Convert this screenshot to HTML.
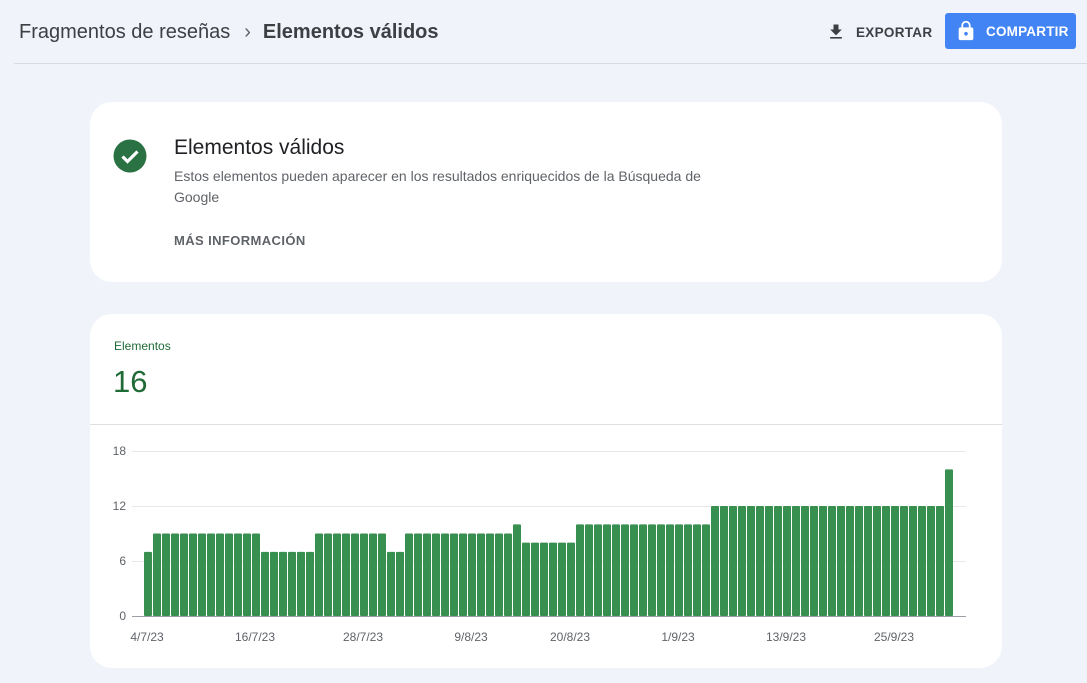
<!DOCTYPE html>
<html><head><meta charset="utf-8"><style>
*{margin:0;padding:0;box-sizing:border-box}
body{width:1087px;height:683px;background:#f0f4fa;font-family:"Liberation Sans",Roboto,sans-serif;position:relative;overflow:hidden;color:#202124}
.hdr{position:absolute;left:0;top:0;width:1087px;height:63px}
.bc{position:absolute;left:19px;top:21px;font-size:20px;color:#3c4043}
.bc b{font-weight:bold;color:#3c4043}
.bc .sep{color:#5f6368;margin:0 12px 0 14px}
.line{position:absolute;left:14px;right:0;top:63px;height:1px;background:#d7dbe0}
.exp{position:absolute;left:826px;top:22px;font-size:13.5px;font-weight:bold;color:#3c4043;letter-spacing:.3px;display:flex;align-items:center}
.share{position:absolute;left:945px;top:13px;width:131px;height:36px;background:#4284f3;border-radius:3px;color:#fff;font-size:13.5px;font-weight:bold;letter-spacing:.2px;display:flex;align-items:center}
.card{position:absolute;left:90px;width:912px;background:#fff;border-radius:22px}
.t1{position:absolute;left:84px;top:34px;font-size:21px;color:#202124}
.d1{position:absolute;left:84px;top:64px;width:570px;font-size:14px;line-height:21px;color:#5f6368}
.more{position:absolute;left:84px;top:131px;font-size:13px;font-weight:bold;color:#5f6368;letter-spacing:.4px}
</style></head><body>
<div class="hdr">
<div class="bc">Fragmentos de reseñas<span class="sep">›</span><b>Elementos válidos</b></div>
<div class="exp"><svg width="20" height="20" viewBox="0 0 24 24" style="margin-right:10px"><path d="M19 9h-4V3H9v6H5l7 7 7-7zM5 18v2h14v-2H5z" fill="#3c4043"/></svg>EXPORTAR</div>
<div class="share"><svg width="22" height="24" viewBox="0 0 24 24" style="margin-left:10px;margin-right:9px"><path d="M18 8h-1V6c0-2.76-2.24-5-5-5S7 3.24 7 6v2H6c-1.1 0-2 .9-2 2v10c0 1.1.9 2 2 2h12c1.1 0 2-.9 2-2V10c0-1.1-.9-2-2-2zm-6 9c-1.1 0-2-.9-2-2s.9-2 2-2 2 .9 2 2-.9 2-2 2zm3.1-9H8.9V6c0-1.710 1.39-3.1 3.1-3.1s3.1 1.39 3.1 3.1v2z" fill="#fff"/></svg>COMPARTIR</div>
</div>
<div class="line"></div>
<div class="card" style="top:102px;height:180px">
<svg style="position:absolute;left:23px;top:37px" width="34" height="34" viewBox="0 0 34 34"><circle cx="17" cy="17" r="16.5" fill="#2a7143"/><path d="M9.5 17.5l5 5 10-10" stroke="#fff" stroke-width="3.2" fill="none"/></svg>
<div class="t1">Elementos válidos</div>
<div class="d1">Estos elementos pueden aparecer en los resultados enriquecidos de la Búsqueda de Google</div>
<div class="more">MÁS INFORMACIÓN</div>
</div>
<div class="card" style="top:314px;height:354px">
<div style="position:absolute;left:24px;top:25px;font-size:12px;color:#1e6b36">Elementos</div>
<div style="position:absolute;left:23px;top:50px;font-size:31px;color:#1e6b36">16</div>
<div style="position:absolute;left:0;right:0;top:110px;height:1px;background:#e0e0e0"></div>
<svg id="ch" style="position:absolute;left:0;top:0" width="912" height="354"></svg>
</div>
<script>
var vals=[7];for(var i=1;i<=12;i++)vals.push(9);for(i=13;i<=18;i++)vals.push(7);for(i=19;i<=26;i++)vals.push(9);vals.push(7,7);for(i=29;i<=40;i++)vals.push(9);vals.push(10);for(i=42;i<=47;i++)vals.push(8);for(i=48;i<=62;i++)vals.push(10);for(i=63;i<=88;i++)vals.push(12);vals.push(16);
var s='',y0=302,k=165/18;
[[18,137],[12,192],[6,247]].forEach(function(a){s+='<line x1="42" x2="876" y1="'+(a[1]+0.5)+'" y2="'+(a[1]+0.5)+'" stroke="#e8e8e8"/>';s+='<text x="36" y="'+(a[1]+4)+'" text-anchor="end" font-size="12" fill="#5f6368" font-family="Liberation Sans">'+a[0]+'</text>';});
s+='<line x1="42" x2="876" y1="302.5" y2="302.5" stroke="#9aa0a6"/><text x="36" y="306" text-anchor="end" font-size="12" fill="#5f6368" font-family="Liberation Sans">0</text>';
vals.forEach(function(v,i){var h=v*k;s+='<rect x="'+(54+9*i)+'" y="'+(y0-h)+'" width="8" height="'+h+'" fill="#378f50" rx="1"/>';});
var d=[['4/7/23',57],['16/7/23',165],['28/7/23',273],['9/8/23',381],['20/8/23',480],['1/9/23',588],['13/9/23',696],['25/9/23',804]];
d.forEach(function(a){s+='<text x="'+a[1]+'" y="327" text-anchor="middle" font-size="12" fill="#5f6368" font-family="Liberation Sans">'+a[0]+'</text>';});
document.getElementById('ch').innerHTML=s;
</script>
</body></html>
